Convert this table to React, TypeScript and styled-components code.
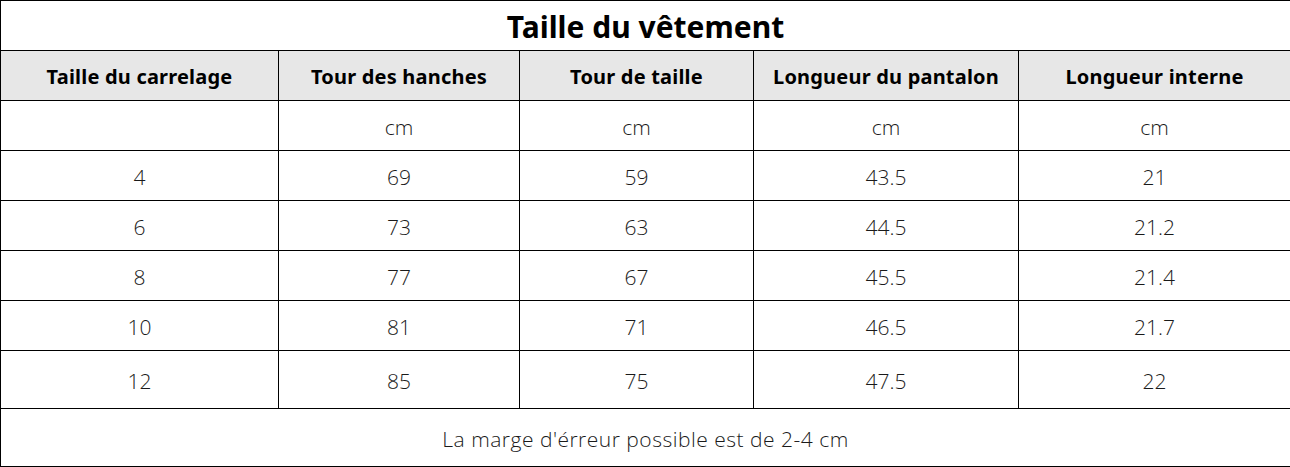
import React from "react";
import styled, { createGlobalStyle } from "styled-components";

const GlobalStyle = createGlobalStyle`
  html, body {
    margin: 0;
    padding: 0;
    background: #fff;
  }
`;

const columns = [
  { label: "Taille du carrelage", width: 278 },
  { label: "Tour des hanches", width: 241 },
  { label: "Tour de taille", width: 234 },
  { label: "Longueur du pantalon", width: 265 },
  { label: "Longueur interne", width: 272 },
];

const rows = [
  ["4", "69", "59", "43.5", "21"],
  ["6", "73", "63", "44.5", "21.2"],
  ["8", "77", "67", "45.5", "21.4"],
  ["10", "81", "71", "46.5", "21.7"],
  ["12", "85", "75", "47.5", "22"],
];

const Table = styled.table`
  width: 1290px;
  border-collapse: collapse;
  table-layout: fixed;
  font-family: "Open Sans", "Noto Sans", "Noto Sans CJK SC", sans-serif;
  color: #111;
`;

// content-box height: row pitch = height + 1px border + top padding
const Cell = styled.td<{ $h?: number }>`
  border: 1px solid #000;
  height: ${(p) => (p.$h ?? 50) - 4}px;
  padding: 3px 0 0;
  text-align: center;
  vertical-align: middle;
  font-size: 21px;
  font-weight: 300;
  color: #1a1a1a;
  line-height: 1;
`;

const TitleCell = styled(Cell)`
  font-family: "Noto Sans", sans-serif;
  font-size: 30px;
  font-weight: 700;
  color: #000;
`;

const HeadCell = styled(Cell)`
  font-family: "Noto Sans", sans-serif;
  background: #e7e7e7;
  font-weight: 700;
  color: #000;
  font-size: 20px;
  letter-spacing: 0.2px;
`;

const NoteCell = styled(Cell)`
  letter-spacing: 0.5px;
`;

export default function App() {
  return (
    <>
      <GlobalStyle />
      <Table>
        <colgroup>
          {columns.map((c) => (
            <col key={c.label} style={{ width: c.width }} />
          ))}
        </colgroup>
        <tbody>
          <tr>
            <TitleCell as="th" colSpan={5}>
              Taille du vêtement
            </TitleCell>
          </tr>
          <tr>
            {columns.map((c) => (
              <HeadCell as="th" key={c.label}>
                {c.label}
              </HeadCell>
            ))}
          </tr>
          <tr>
            <Cell />
            {columns.slice(1).map((c) => (
              <Cell key={c.label}>cm</Cell>
            ))}
          </tr>
          {rows.map((r, i) => (
            <tr key={r[0]}>
              {r.map((v, j) => (
                <Cell key={j} $h={i === rows.length - 1 ? 58 : 50}>
                  {v}
                </Cell>
              ))}
            </tr>
          ))}
          <tr>
            <NoteCell colSpan={5} $h={58}>
              La marge d'érreur possible est de 2-4 cm
            </NoteCell>
          </tr>
        </tbody>
      </Table>
    </>
  );
}
